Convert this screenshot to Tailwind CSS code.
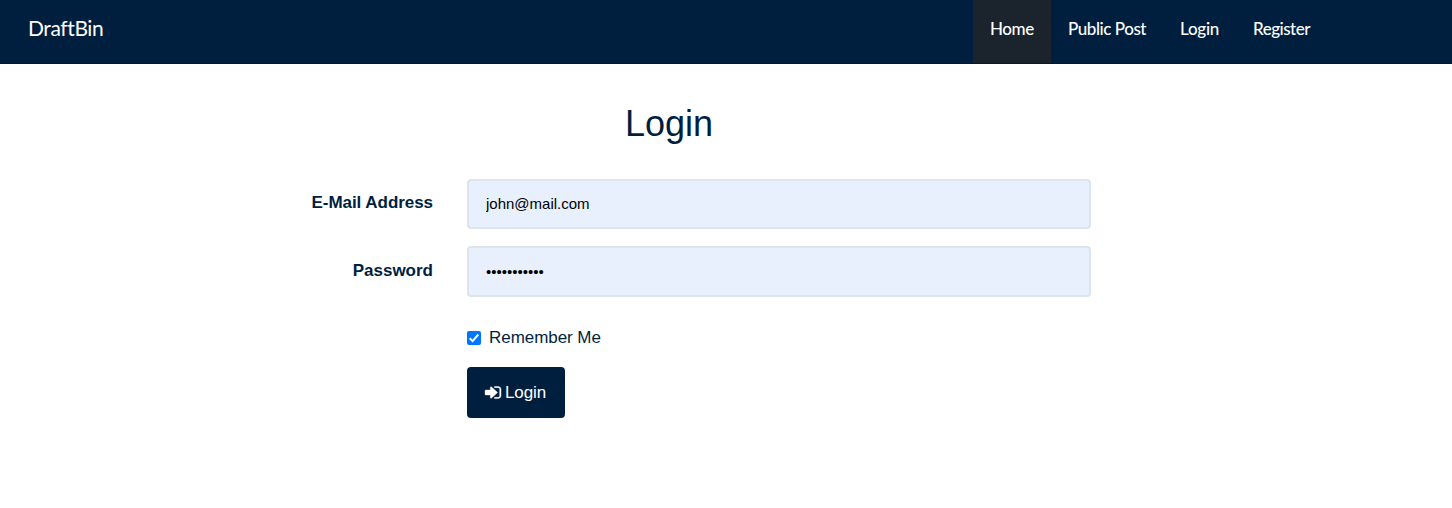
<!DOCTYPE html>
<html lang="en">
<head>
<meta charset="utf-8">
<title>DraftBin</title>
<script src="https://cdn.jsdelivr.net/npm/@tailwindcss/browser@4"></script>
</head>
<body class="bg-white font-['Liberation_Sans',Arial,sans-serif] text-[17px] leading-6 text-[#001f3f]">
<nav class="flex h-16 items-start justify-between border-b border-[#001a35] bg-[#001f3f] pl-7 pr-[125px] font-['Lato',sans-serif] text-white">
  <a class="pt-4 text-[21px] leading-6 tracking-[-0.4px]">DraftBin</a>
  <ul class="flex h-[63px] whitespace-nowrap text-[17px] font-medium leading-6">
    <li class="w-[78px] bg-[#1b242d] pl-[17px] pt-[17px] tracking-[-0.4px]">Home</li>
    <li class="w-28 pl-[17px] pt-[17px] tracking-[-0.45px]">Public Post</li>
    <li class="w-[73px] pl-[17px] pt-[17px] tracking-[-0.25px]">Login</li>
    <li class="w-[91px] pl-[17px] pt-[17px] tracking-[-0.5px]">Register</li>
  </ul>
</nav>
<main>
  <h1 class="pl-[625px] pt-10 text-[36px] leading-10">Login</h1>
  <form class="mt-[35px] grid w-[1091px] grid-cols-[433px_624px] gap-x-[34px]">
    <label class="pt-3 text-right font-bold tracking-[-0.05px]">E-Mail Address</label>
    <input type="text" value="john@mail.com" class="h-[50px] rounded-[4px] border-2 border-[#dce4ec] bg-[#e8f0fe] px-[17px] pb-0.5 text-[15px] text-black">
    <label class="mt-[17px] pt-[13px] text-right font-bold">Password</label>
    <input type="password" value="draftbin123" class="mt-[17px] h-[51px] rounded-[4px] border-2 border-[#dce4ec] bg-[#e8f0fe] px-[17px] text-[15px] text-black">
    <label class="col-start-2 mt-[29px] flex items-center gap-2">
      <svg class="size-[14px]" viewBox="0 0 14 14"><rect width="14" height="14" rx="2" fill="#0075ff"/><path d="M2.7 7.2 5.6 10.1 11.3 3.5" fill="none" stroke="#fff" stroke-width="2"/></svg>
      <span class="tracking-[-0.05px]">Remember Me</span>
    </label>
    <button type="button" class="col-start-2 mt-[17px] flex h-[51px] w-[98px] items-center rounded-[4px] bg-[#001f3f] pl-[18px] text-white">
      <svg class="mr-1 h-[17px] w-4 overflow-visible" viewBox="0 0 1536 1792" preserveAspectRatio="none" fill="currentColor" stroke="currentColor" stroke-width="40"><path d="M1184 896q0 26-19 45l-544 544q-19 19-45 19t-45-19-19-45v-288H64q-26 0-45-19t-19-45V704q0-26 19-45t45-19h448V352q0-26 19-45t45-19 45 19l544 544q19 19 19 45zm352-352v704q0 119-84.500 203.500T1248 1536H928q-13 0-22.500-9.500T896 1504q0-4-1-20t-.5-26.500 3-23.500 10-19.500 20.500-6.500h320q66 0 113-47t47-113V544q0-66-47-113t-113-47H936l-11.500-1-11.500-3-8-5.500-7-9-2-13.500q0-4-1-20t-.5-26.500 3-23.500 10-19.500 20.500-6.500h320q119 0 203.500 84.500T1536 544z"/></svg>
      <span class="tracking-[-0.1px]">Login</span>
    </button>
  </form>
</main>
</body>
</html>
